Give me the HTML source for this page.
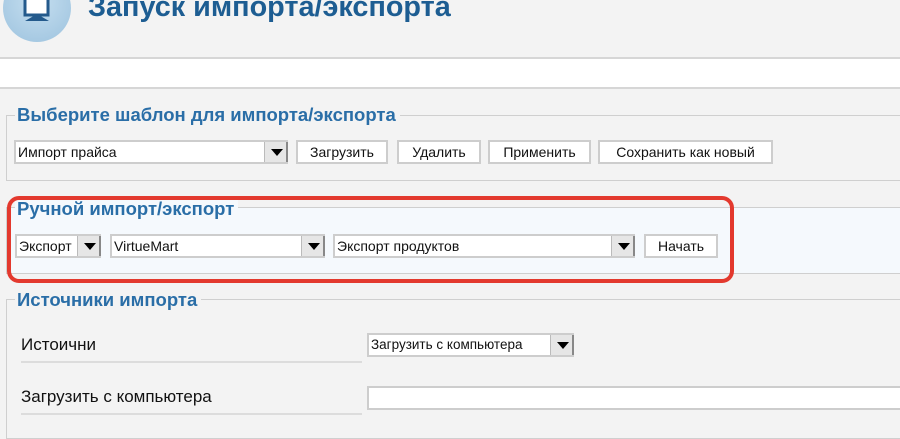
<!DOCTYPE html>
<html><head><meta charset="utf-8"><style>
*{box-sizing:border-box;margin:0;padding:0}
body{width:900px;height:434px;overflow:hidden;background:#f3f3f3;font-family:"Liberation Sans",Arial,sans-serif;position:relative;font-size:13px;color:#111}
.a{position:absolute}
.title{left:88px;top:-9px;font-size:28.8px;font-weight:bold;color:#1d5d92;white-space:nowrap}
.leg{font-size:18.5px;font-weight:bold;color:#2a6ea7;background:#f3f3f3;padding:0 4px 0 2px;white-space:nowrap}
.fs{border:1px solid #cfcfcf;border-right:none}
.sel{background:#fff;border:2px solid #cdcdcd;border-right:none;height:24px;font-size:14px;padding:2px 0 0 2px;white-space:nowrap;overflow:hidden}
.arr{position:absolute;right:0;top:0;width:24px;height:22px;background:#e6e6e6;border-left:1px solid #bbb;border-right:2px solid #888;border-bottom:2px solid #888}
.arr:after{content:"";position:absolute;left:6px;top:7px;border-left:6px solid transparent;border-right:6px solid transparent;border-top:7px solid #000}
.btn{background:#fff;border:2px solid #cdcdcd;height:24px;font-size:14px;text-align:center;padding-top:2px;white-space:nowrap}
</style></head><body>
<div class="a" style="left:3px;top:-26px;width:68px;height:68px;border-radius:50%;background:radial-gradient(circle at 50% 40%,#c6dff0,#9cc2de)"></div>
<svg class="a" style="left:22px;top:0" width="30" height="22"><rect x="3" y="-2" width="23" height="17" fill="#fff" stroke="#245a8c" stroke-width="3"/><path d="M3 21 L15 14 L27 21 Z" fill="#245a8c"/></svg>
<div class="a title">Запуск импорта/экспорта</div>
<div class="a" style="left:0;top:57px;width:900px;height:32px;background:#fff;border-top:2px solid #d6d6d6;border-bottom:2px solid #d6d6d6"></div>

<div class="a fs" style="left:6px;top:115px;width:900px;height:66px"></div>
<div class="a leg" style="left:15px;top:104px">Выберите шаблон для импорта/экспорта</div>
<div class="a sel" style="left:14px;top:140px;width:274px">Импорт прайса<div class="arr"></div></div>
<div class="a btn" style="left:296px;top:140px;width:92px">Загрузить</div>
<div class="a btn" style="left:397px;top:140px;width:84px">Удалить</div>
<div class="a btn" style="left:488px;top:140px;width:103px">Применить</div>
<div class="a btn" style="left:598px;top:140px;width:175px">Сохранить как новый</div>

<div class="a fs" style="left:6px;top:207px;width:900px;height:67px;background:#f5f9fd"></div>
<div class="a leg" style="left:15px;top:198px;background:#f5f9fd">Ручной импорт/экспорт</div>
<div class="a sel" style="left:15px;top:234px;width:86px">Экспорт<div class="arr"></div></div>
<div class="a sel" style="left:110px;top:234px;width:215px">VirtueMart<div class="arr"></div></div>
<div class="a sel" style="left:333px;top:234px;width:302px">Экспорт продуктов<div class="arr"></div></div>
<div class="a btn" style="left:644px;top:234px;width:74px">Начать</div>
<div class="a" style="left:7px;top:196px;width:727px;height:87px;border:4px solid #e3392e;border-radius:12px"></div>

<div class="a fs" style="left:6px;top:299px;width:900px;height:140px"></div>
<div class="a leg" style="left:15px;top:289px">Источники импорта</div>
<div class="a" style="left:21px;top:335px;font-size:17px">Истоични</div>
<div class="a" style="left:21px;top:361px;width:341px;height:2px;background:#dcdcdc"></div>
<div class="a sel" style="left:367px;top:333px;width:207px;font-size:13.5px">Загрузить с компьютера<div class="arr"></div></div>
<div class="a" style="left:21px;top:387px;font-size:17px">Загрузить с компьютера</div>
<div class="a" style="left:21px;top:413px;width:341px;height:2px;background:#dcdcdc"></div>
<div class="a" style="left:367px;top:386px;width:540px;height:24px;background:#fff;border:2px solid #cdcdcd"></div>
</body></html>
